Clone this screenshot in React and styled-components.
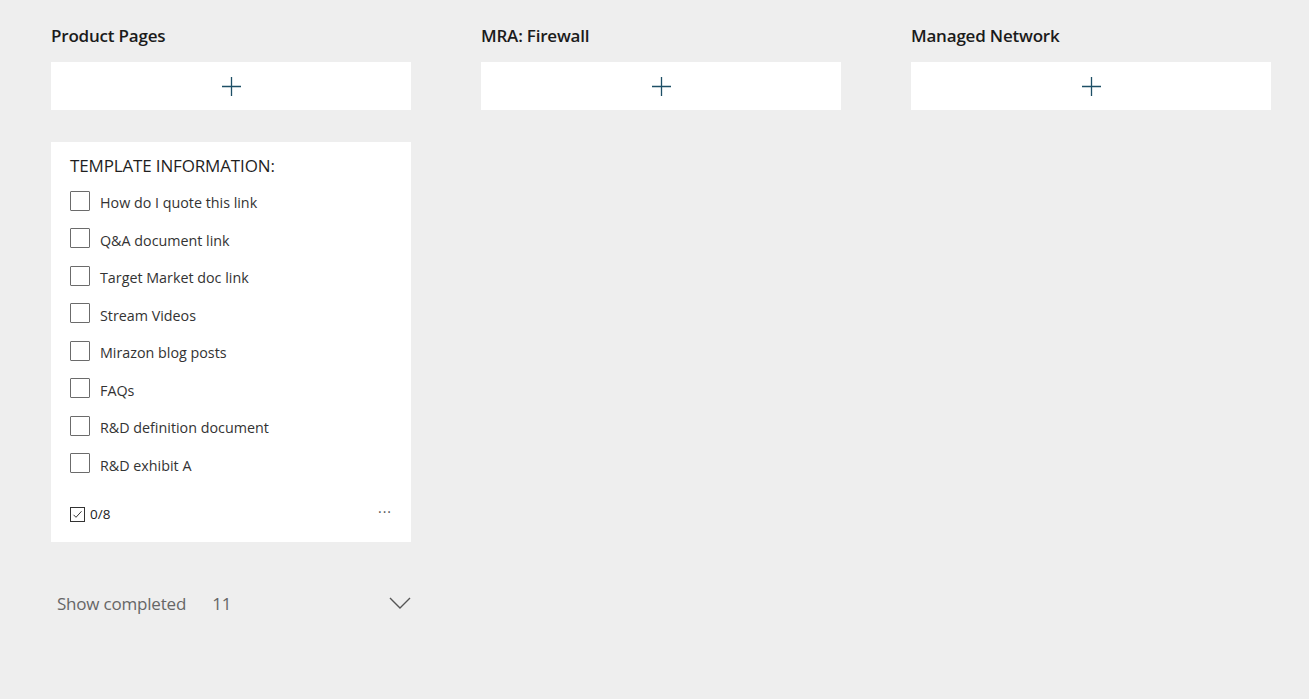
import React from "react";
import styled, { createGlobalStyle } from "styled-components";

const Global = createGlobalStyle`
  html, body { margin: 0; padding: 0; background: #eeeeee; }
  body { font-family: "Open Sans", "Noto Sans", sans-serif; color: #222; }
`;

const Board = styled.div`
  display: flex;
  gap: 70px;
  padding: 25px 0 0 51px;
  min-height: 699px;
  box-sizing: border-box;
`;

const Column = styled.div`
  width: 360px;
  display: flex;
  flex-direction: column;
`;

const ColTitle = styled.div`
  font-size: 17px;
  font-weight: 600;
  line-height: 22px;
  color: #1b1b1b;
  letter-spacing: -0.2px;
  height: 22px;
  margin-bottom: 15px;
`;

const AddButton = styled.button`
  height: 48px;
  width: 100%;
  border: none;
  background: #fff;
  display: flex;
  align-items: center;
  justify-content: center;
  padding: 0;
  cursor: pointer;
`;

const Card = styled.div`
  margin-top: 32px;
  background: #fff;
  padding: 13px 19px 18px 19px;
  display: flex;
  flex-direction: column;
`;

const CardTitle = styled.div`
  font-size: 17px;
  line-height: 22px;
  color: #1f1f1f;
  letter-spacing: -0.15px;
  margin-bottom: 7px;
`;

const Row = styled.div`
  display: flex;
  align-items: center;
  height: 37.5px;
  gap: 10px;
`;

const Box = styled.span`
  width: 18px;
  height: 18px;
  border: 1px solid #6b6b6b;
  border-radius: 1px;
  flex: none;
  margin-top: -4px;
`;

const Label = styled.span`
  font-size: 14.3px;
  color: #333;
  letter-spacing: 0;
`;

const Footer = styled.div`
  display: flex;
  align-items: center;
  justify-content: space-between;
  margin-top: 20px;
  height: 20px;
`;

const Progress = styled.div`
  display: flex;
  align-items: center;
  gap: 5px;
  font-size: 13.5px;
  color: #222;
`;

const More = styled.span`
  font-size: 14px;
  color: #555;
  letter-spacing: 1px;
  margin-right: 0;
  margin-top: -6px;
`;

const Completed = styled.div`
  display: flex;
  align-items: center;
  margin-top: 48px;
  padding-left: 6px;
  height: 26px;
  color: #666;
  font-size: 17px;
  letter-spacing: -0.2px;
`;

const Count = styled.span`
  margin-left: 26px;
  flex: 1;
`;

const Plus = () => (
  <svg width="21" height="21" viewBox="0 0 21 21">
    <path d="M10.5 1v19M1 10.5h19" stroke="#1d4f66" strokeWidth="1.3" />
  </svg>
);

const CheckBoxIcon = () => (
  <svg width="15" height="15" viewBox="0 0 15 15">
    <rect x="0.5" y="0.5" width="14" height="14" fill="none" stroke="#333" strokeWidth="1" />
    <path d="M3.5 7.8l2.5 2.5 5.5-6" fill="none" stroke="#333" strokeWidth="1" />
  </svg>
);

const Chevron = () => (
  <svg width="22" height="13" viewBox="0 0 22 13">
    <path d="M1 1l10 10 10-10" fill="none" stroke="#555" strokeWidth="1.4" />
  </svg>
);

const items = [
  "How do I quote this link",
  "Q&A document link",
  "Target Market doc link",
  "Stream Videos",
  "Mirazon blog posts",
  "FAQs",
  "R&D definition document",
  "R&D exhibit A",
];

export default function App() {
  return (
    <>
      <Global />
      <Board>
        <Column>
          <ColTitle>Product Pages</ColTitle>
          <AddButton aria-label="Add task"><Plus /></AddButton>
          <Card>
            <CardTitle>TEMPLATE INFORMATION:</CardTitle>
            {items.map((t) => (
              <Row key={t}>
                <Box />
                <Label>{t}</Label>
              </Row>
            ))}
            <Footer>
              <Progress>
                <CheckBoxIcon />
                <span>0/8</span>
              </Progress>
              <More>···</More>
            </Footer>
          </Card>
          <Completed>
            <span>Show completed</span>
            <Count>11</Count>
            <Chevron />
          </Completed>
        </Column>
        <Column>
          <ColTitle>MRA: Firewall</ColTitle>
          <AddButton aria-label="Add task"><Plus /></AddButton>
        </Column>
        <Column>
          <ColTitle>Managed Network</ColTitle>
          <AddButton aria-label="Add task"><Plus /></AddButton>
        </Column>
      </Board>
    </>
  );
}
